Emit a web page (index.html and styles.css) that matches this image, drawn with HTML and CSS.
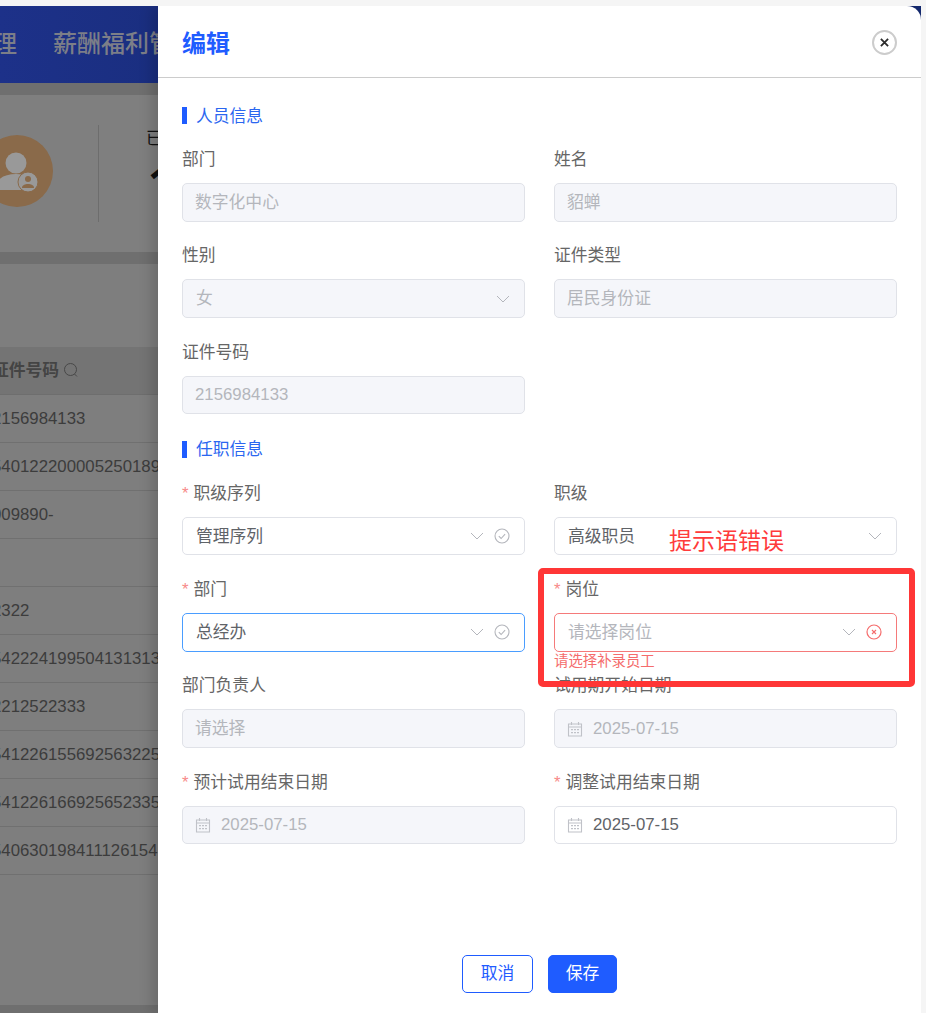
FILE: index.html
```html
<!DOCTYPE html>
<html lang="zh-CN">
<head>
<meta charset="utf-8">
<title>编辑</title>
<link rel="stylesheet" href="styles.css">
</head>
<body>
<svg class="defs" aria-hidden="true">
  <symbol id="i-chevron" viewBox="0 0 14 8"><path d="M1 1l6 6 6-6" fill="none" stroke="currentColor" stroke-width="1"/></symbol>
  <symbol id="i-check" viewBox="0 0 16 16"><circle cx="8" cy="8" r="7" fill="none" stroke="currentColor" stroke-width="1.1"/><path d="M4.8 8.2l2.3 2.3 4-4.4" fill="none" stroke="currentColor" stroke-width="1.1"/></symbol>
  <symbol id="i-error" viewBox="0 0 16 16"><circle cx="8" cy="8" r="7" fill="none" stroke="currentColor" stroke-width="1.2"/><path d="M6 6l4 4M10 6l-4 4" fill="none" stroke="currentColor" stroke-width="1.1"/></symbol>
  <symbol id="i-date" viewBox="0 0 16 16"><path d="M1.5 3h13v12h-13zM1.5 6h13M4.500 1v3M11.500 1v3" fill="none" stroke="currentColor" stroke-width="1.1"/><path d="M4 8h2v1.300H4zM7 8h2v1.300H7zM10 8h2v1.300h-2zM4 11h2v1.300H4zM7 11h2v1.300H7zM10 11h2v1.300h-2z" fill="currentColor"/></symbol>
</svg>
<div class="app">
  <nav class="nav"><span class="nav-first">理</span><span>薪酬福利管理</span></nav>
  <section class="summary">
    <svg class="avatar" viewBox="0 0 72 72">
      <circle cx="36" cy="36" r="36" fill="#8a6a4a"/>
      <circle cx="35" cy="28" r="10.500" fill="#999"/>
      <path d="M14 55c0-11 9-16 21-16 5 0 9 1 12 3v13z" fill="#999"/>
      <circle cx="47" cy="47" r="10" fill="#999" stroke="#8a6a4a" stroke-width="1"/>
      <circle cx="47" cy="44" r="3" fill="#8a6a4a"/>
      <path d="M41 53c0-3 3-4 6-4s6 1 6 4z" fill="#8a6a4a"/>
    </svg>
    <div class="divider"></div>
    <div class="stat"><div class="stat-label">已</div><div class="stat-num">1</div></div>
  </section>
  <section class="table-area">
    <div class="tr th"><span>证件号码</span>
      <svg class="search" viewBox="0 0 16 16"><circle cx="7.500" cy="7.500" r="6" fill="none" stroke="currentColor"/><path d="M11.500 12l2.500 2.500" stroke="currentColor" fill="none"/></svg>
    </div>
    <div class="tr"><span>2156984133</span></div>
    <div class="tr"><span>540122200005250189</span></div>
    <div class="tr"><span>009890-</span></div>
    <div class="tr"></div>
    <div class="tr"><span>2322</span></div>
    <div class="tr"><span>542224199504131313</span></div>
    <div class="tr"><span>2212522333</span></div>
    <div class="tr"><span>541226155692563225</span></div>
    <div class="tr"><span>541226166925652335</span></div>
    <div class="tr"><span>540630198411126154</span></div>
  </section>

  <aside class="drawer">
    <header class="drawer-head">
      <h1>编辑</h1>
      <button class="close" type="button" aria-label="关闭"><svg viewBox="0 0 10 10"><path d="M1 1l8 8M9 1l-8 8" stroke="currentColor" stroke-width="2" fill="none"/></svg></button>
    </header>
    <div class="drawer-body">
      <h2 class="sec">人员信息</h2>
      <div class="grid">
        <div class="field"><label>部门</label><div class="ctl off"><span class="val">数字化中心</span></div></div>
        <div class="field"><label>姓名</label><div class="ctl off"><span class="val">貂蝉</span></div></div>
        <div class="field"><label>性别</label><div class="ctl sel off"><span class="val">女</span><svg class="chev"><use href="#i-chevron"/></svg></div></div>
        <div class="field"><label>证件类型</label><div class="ctl off"><span class="val">居民身份证</span></div></div>
        <div class="field"><label>证件号码</label><div class="ctl off">2156984133</div></div>
        <div class="field"></div>
      </div>
      <h2 class="sec sec-2">任职信息</h2>
      <div class="grid">
        <div class="field"><label><i>*</i>职级序列</label><div class="ctl sel"><span class="val">管理序列</span><svg class="chev"><use href="#i-chevron"/></svg><svg class="state"><use href="#i-check"/></svg></div></div>
        <div class="field"><label>职级</label><div class="ctl sel"><span class="val">高级职员</span><svg class="chev"><use href="#i-chevron"/></svg></div></div>
        <div class="field"><label><i>*</i>部门</label><div class="ctl sel focus"><span class="val">总经办</span><svg class="chev"><use href="#i-chevron"/></svg><svg class="state"><use href="#i-check"/></svg></div></div>
        <div class="field"><label><i>*</i>岗位</label><div class="ctl sel err"><span class="val ph">请选择岗位</span><svg class="chev"><use href="#i-chevron"/></svg><svg class="state"><use href="#i-error"/></svg></div><div class="msg">请选择补录员工</div></div>
        <div class="field"><label>部门负责人</label><div class="ctl off"><span class="val">请选择</span></div></div>
        <div class="field"><label>试用期开始日期</label><div class="ctl off"><svg class="date"><use href="#i-date"/></svg>2025-07-15</div></div>
        <div class="field"><label><i>*</i>预计试用结束日期</label><div class="ctl off"><svg class="date"><use href="#i-date"/></svg>2025-07-15</div></div>
        <div class="field"><label><i>*</i>调整试用结束日期</label><div class="ctl"><svg class="date"><use href="#i-date"/></svg>2025-07-15</div></div>
      </div>
    </div>
    <footer class="drawer-foot">
      <button class="btn" type="button">取消</button>
      <button class="btn primary" type="button">保存</button>
    </footer>
  </aside>
</div>
<div class="mark-box"></div>
<div class="mark-text">提示语错误</div>
</body>
</html>
```
FILE: styles.css
```css
* { box-sizing: border-box; }
html, body { margin: 0; height: 1013px; overflow: hidden; }
body {
  position: relative;
  padding-top: 6px;
  background: #f5f5f5;
  font-family: "Liberation Sans", "Noto Sans CJK SC", sans-serif;
  font-size: 16.8px;
  color: #666;
}
.defs { display: none; }
.app {
  position: relative;
  width: 921px;
  height: 1007px;
  background: linear-gradient(#6f6f6f, #6f6f6f) 0 0 / 158px 100% no-repeat;
  overflow: hidden;
}
.nav {
  display: flex;
  gap: 36px;
  align-items: center;
  height: 77px;
  padding-bottom: 6px;
  white-space: nowrap;
  background: linear-gradient(90deg, #1d3189, #14296f 50%);
  color: #7c7e88;
  font-size: 24px;
  font-weight: 500;
}
.nav-first { margin-left: -7px; }
.summary {
  display: flex;
  align-items: center;
  height: 157px;
  margin-top: 12px;
  background: #7f7f7f;
}
.avatar { width: 72px; height: 72px; margin-left: -19px; margin-bottom: 5px; flex: none; }
.divider { width: 1px; height: 97px; margin-left: 45px; background: #6d6d6d; flex: none; }
.stat { align-self: flex-start; margin-top: 35px; margin-left: 47px; color: #111; }
.stat-label { line-height: 18px; }
.stat-num { margin-top: 10px; margin-left: 2px; font-family: "Open Sans", sans-serif; font-size: 44px; line-height: 48px; font-weight: 700; }
.table-area {
  height: 741px;
  margin-top: 12px;
  padding-top: 83px;
  background: #7e7e7e;
  color: #3c3c3c;
}
.tr {
  display: flex;
  align-items: center;
  gap: 4px;
  height: 48px;
  margin-left: -8px;
  border-bottom: 1px solid #707070;
  white-space: nowrap;
}
.tr span { padding-top: 1px; }
.th {
  background: #747474;
  font-weight: 700;
  color: #444;
  border-bottom-color: #6e6e6e;
}
.th span { padding: 0 0 3px; }
.search { width: 16px; height: 16px; margin-bottom: 2px; color: #484848; flex: none; }

.drawer {
  position: absolute;
  top: 0;
  right: 0;
  bottom: 0;
  width: 763px;
  display: flex;
  flex-direction: column;
  background: #fff;
  border-top-right-radius: 14px;
  box-shadow: -6px 0 14px rgba(0, 0, 0, .16);
}
.drawer-head {
  display: flex;
  align-items: center;
  justify-content: space-between;
  flex: none;
  height: 72px;
  padding: 1px 24px 0;
  border-bottom: 1px solid #ccc;
}
.drawer-head h1 { margin: 3px 0 0; font-size: 24px; font-weight: 700; line-height: 32px; color: #1f5cff; }
.close {
  display: flex;
  align-items: center;
  justify-content: center;
  width: 25px;
  height: 25px;
  padding: 0;
  background: #fff;
  border: 2px solid #ccc;
  border-radius: 50%;
  color: #2b2b2b;
}
.close svg { width: 9px; height: 9px; }
.drawer-body { flex: 1; padding: 29px 24px 0; }
.sec {
  display: flex;
  align-items: center;
  height: 17px;
  margin: 0 0 23px;
  padding: 0 0 2px 9px;
  border-left: 5px solid #1f5cff;
  font-size: 16.8px;
  font-weight: 400;
  color: #2a66f0;
}
.sec-2 { margin-top: 5px; }
.grid {
  display: grid;
  grid-template-columns: 343px 343px;
  column-gap: 29px;
  grid-auto-rows: 96.25px;
}
.field { position: relative; }
.field label { display: block; height: 26px; margin-bottom: 10px; padding-top: 1px; line-height: 24px; color: #666; white-space: nowrap; }
.field label i { margin-right: 5px; font-style: normal; color: #f78989; }
.ctl {
  display: flex;
  align-items: center;
  height: 38.5px;
  padding: 0 14px 0 12px;
  background: #fff;
  border: 1px solid #e0e2e8;
  border-radius: 5px;
  color: #5f6368;
}
.ctl.sel { padding-left: 13px; }
.ctl.off { background: #f5f6fa; color: #b4b6bc; }
.ctl.focus { border-color: #4a9dff; }
.ctl.err { border-color: #f57a7a; }
.val { flex: 1; padding-bottom: 3px; }
.val.ph { color: #b4b6bc; }
.chev { width: 14px; height: 8px; color: #b4b6bc; flex: none; }
.state { width: 16px; height: 16px; margin-left: 10px; color: #b4b6bc; flex: none; }
.err .state { color: #f56c6c; }
.date { width: 16px; height: 16px; margin-right: 10px; color: #c0c2c8; flex: none; }
.msg { position: absolute; left: 0; top: 75px; font-size: 14.4px; line-height: 18px; color: #f56c6c; white-space: nowrap; }
.drawer-foot {
  display: flex;
  justify-content: center;
  gap: 15px;
  flex: none;
  padding-bottom: 20px;
}
.btn {
  width: 71px;
  height: 38px;
  padding: 0 0 4px;
  background: #fff;
  border: 1px solid #1f5cff;
  border-radius: 5px;
  color: #1f5cff;
  font: inherit;
}
.btn.primary { width: 69px; background: #1f5cff; color: #fff; }

.mark-box {
  position: absolute;
  left: 538px;
  top: 568px;
  width: 377px;
  height: 119px;
  border: 6px solid #ff3636;
  border-radius: 5px;
}
.mark-text {
  position: absolute;
  left: 669px;
  top: 525px;
  font-size: 23px;
  line-height: 32px;
  color: #ff3b3b;
}
```
